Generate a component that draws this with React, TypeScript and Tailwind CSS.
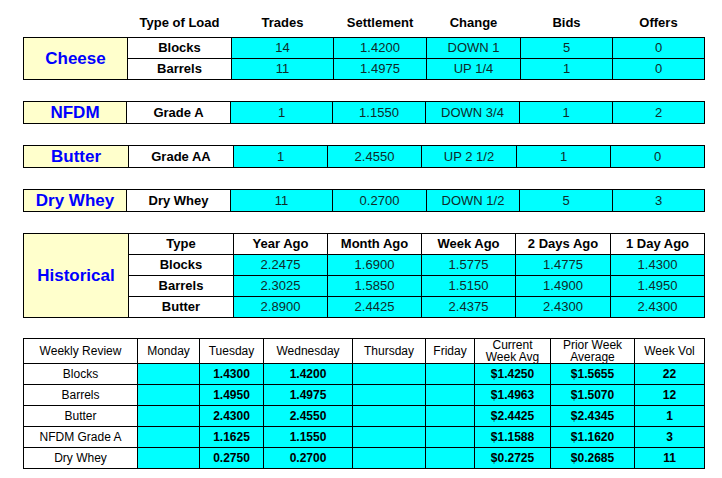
import React from "react"

const font = "font-['Liberation_Sans',Arial,sans-serif]"

type Spot = {
    label: string
    rows: { type: string; trades: string; settle: string; change: string; bids: string; offers: string }[]
    cols: string
    rowH: string
    mt: string
}

const spots: Spot[] = [
    {
        label: "Cheese",
        rows: [
            { type: "Blocks", trades: "14", settle: "1.4200", change: "DOWN 1", bids: "5", offers: "0" },
            { type: "Barrels", trades: "11", settle: "1.4975", change: "UP 1/4", bids: "1", offers: "0" },
        ],
        cols: "grid-cols-[103px_103px_101px_92px_93px_91px_91px]",
        rowH: "grid-rows-[20px_20px]",
        mt: "mt-0",
    },
    {
        label: "NFDM",
        rows: [{ type: "Grade A", trades: "1", settle: "1.1550", change: "DOWN 3/4", bids: "1", offers: "2" }],
        cols: "grid-cols-[102px_103px_101px_92px_93px_92px_91px]",
        rowH: "grid-rows-[21px]",
        mt: "mt-[21px]",
    },
    {
        label: "Butter",
        rows: [{ type: "Grade AA", trades: "1", settle: "2.4550", change: "UP 2 1/2", bids: "1", offers: "0" }],
        cols: "grid-cols-[104px_104px_93px_93px_94px_93px_93px]",
        rowH: "grid-rows-[21px]",
        mt: "mt-[21px]",
    },
    {
        label: "Dry Whey",
        rows: [{ type: "Dry Whey", trades: "11", settle: "0.2700", change: "DOWN 1/2", bids: "5", offers: "3" }],
        cols: "grid-cols-[102px_103px_101px_93px_92px_92px_91px]",
        rowH: "grid-rows-[21px]",
        mt: "mt-[21px]",
    },
]

const historical = [
    { type: "Blocks", v: ["2.2475", "1.6900", "1.5775", "1.4775", "1.4300"] },
    { type: "Barrels", v: ["2.3025", "1.5850", "1.5150", "1.4900", "1.4950"] },
    { type: "Butter", v: ["2.8900", "2.4425", "2.4375", "2.4300", "2.4300"] },
]

const weekly = [
    { name: "Blocks", tue: "1.4300", wed: "1.4200", cur: "$1.4250", prior: "$1.5655", vol: "22" },
    { name: "Barrels", tue: "1.4950", wed: "1.4975", cur: "$1.4963", prior: "$1.5070", vol: "12" },
    { name: "Butter", tue: "2.4300", wed: "2.4550", cur: "$2.4425", prior: "$2.4345", vol: "1" },
    { name: "NFDM Grade A", tue: "1.1625", wed: "1.1550", cur: "$1.1588", prior: "$1.1620", vol: "3" },
    { name: "Dry Whey", tue: "0.2750", wed: "0.2700", cur: "$0.2725", prior: "$0.2685", vol: "11" },
]

const cell = "flex items-center justify-center"
const label = `${cell} bg-[#ffffcc] text-[17px] font-bold text-[#0000ff]`
const typeCell = `${cell} bg-white text-[13px] font-bold text-black`
const data = `${cell} bg-[#00ffff] text-[13px] text-[#0f2a2a]`

export default function App() {
    return (
        <div className={`w-[722px] h-[478px] bg-white pl-[23px] pt-[13px] ${font}`}>
            {/* column headings */}
            <div className="grid grid-cols-[103px_103px_101px_92px_93px_91px_91px] gap-px px-px h-[20px] mb-[4px] text-[13px] font-bold text-black">
                <div />
                {["Type of Load", "Trades", "Settlement", "Change", "Bids", "Offers"].map((h) => (
                    <div key={h} className={cell}>{h}</div>
                ))}
            </div>

            {spots.map((s) => (
                <div key={s.label} className={`grid w-fit bg-black p-px gap-px ${s.cols} ${s.rowH} ${s.mt}`}>
                    <div className={`${label} ${s.rows.length > 1 ? "row-span-2" : ""}`}>{s.label}</div>
                    {s.rows.map((r) => (
                        <React.Fragment key={r.type}>
                            <div className={`${typeCell} col-start-2`}>{r.type}</div>
                            <div className={data}>{r.trades}</div>
                            <div className={data}>{r.settle}</div>
                            <div className={data}>{r.change}</div>
                            <div className={data}>{r.bids}</div>
                            <div className={data}>{r.offers}</div>
                        </React.Fragment>
                    ))}
                </div>
            ))}

            {/* historical */}
            <div className="grid w-fit bg-black p-px gap-px mt-[21px] grid-cols-[104px_104px_93px_93px_93px_94px_93px] grid-rows-[20px_20px_20px_20px]">
                <div className={`${label} row-span-4`}>Historical</div>
                {["Type", "Year Ago", "Month Ago", "Week Ago", "2 Days Ago", "1 Day Ago"].map((h) => (
                    <div key={h} className={typeCell}>{h}</div>
                ))}
                {historical.map((r) => (
                    <React.Fragment key={r.type}>
                        <div className={`${typeCell} col-start-2`}>{r.type}</div>
                        {r.v.map((v, i) => (
                            <div key={i} className={data}>{v}</div>
                        ))}
                    </React.Fragment>
                ))}
            </div>

            {/* weekly review */}
            <div className="grid w-fit bg-black p-px gap-px mt-[20px] grid-cols-[113px_61px_63px_88px_72px_48px_75px_83px_69px] grid-rows-[24px_20px_20px_20px_20px_20px] text-[12px] text-black">
                <div className={`${cell} bg-white`}>Weekly Review</div>
                <div className={`${cell} bg-white`}>Monday</div>
                <div className={`${cell} bg-white`}>Tuesday</div>
                <div className={`${cell} bg-white`}>Wednesday</div>
                <div className={`${cell} bg-white`}>Thursday</div>
                <div className={`${cell} bg-white`}>Friday</div>
                <div className={`${cell} bg-white`}>
                    <p className="leading-[12px] text-center">Current<br />Week Avg</p>
                </div>
                <div className={`${cell} bg-white`}>
                    <p className="leading-[12px] text-center">Prior Week<br />Average</p>
                </div>
                <div className={`${cell} bg-white`}>Week Vol</div>
                {weekly.map((r) => (
                    <React.Fragment key={r.name}>
                        <div className={`${cell} bg-white`}>{r.name}</div>
                        <div className="bg-[#00ffff]" />
                        <div className={`${cell} bg-[#00ffff] font-bold`}>{r.tue}</div>
                        <div className={`${cell} bg-[#00ffff] font-bold`}>{r.wed}</div>
                        <div className="bg-[#00ffff]" />
                        <div className="bg-[#00ffff]" />
                        <div className={`${cell} bg-[#00ffff] font-bold`}>{r.cur}</div>
                        <div className={`${cell} bg-[#00ffff] font-bold`}>{r.prior}</div>
                        <div className={`${cell} bg-[#00ffff] font-bold`}>{r.vol}</div>
                    </React.Fragment>
                ))}
            </div>
        </div>
    )
}
